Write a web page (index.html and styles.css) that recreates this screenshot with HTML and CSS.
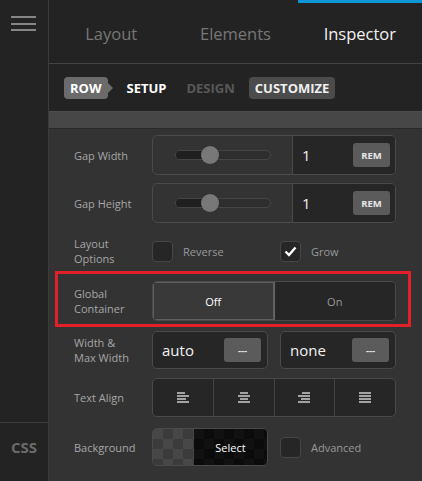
FILE: index.html
```html
<!DOCTYPE html>
<html lang="en">
<head>
  <meta charset="UTF-8">
  <title>Inspector</title>
  <link rel="stylesheet" href="styles.css">
</head>
<body>
  <div class="app">

    <!-- left rail -->
    <aside class="rail">
      <div class="menu"><span></span><span></span><span></span></div>
      <div class="rail-css">CSS</div>
    </aside>

    <main class="panel">
      <nav class="tabs">
        <a class="tab">Layout</a>
        <a class="tab">Elements</a>
        <a class="tab active">Inspector</a>
      </nav>

      <div class="crumbs">
        <span class="crumb crumb-row">ROW</span>
        <span class="crumb crumb-on">SETUP</span>
        <span class="crumb crumb-off">DESIGN</span>
        <span class="crumb crumb-pill">CUSTOMIZE</span>
      </div>
      <div class="band"></div>

      <div class="props">
        <!-- Gap Width -->
        <div class="row">
          <div class="label">Gap Width</div>
          <div class="box">
            <div class="slider">
              <div class="track"><div class="fill"></div><div class="thumb"></div></div>
            </div>
            <div class="value"><span class="num">1</span><button class="unit">REM</button></div>
          </div>
        </div>

        <!-- Gap Height -->
        <div class="row">
          <div class="label">Gap Height</div>
          <div class="box">
            <div class="slider">
              <div class="track"><div class="fill"></div><div class="thumb"></div></div>
            </div>
            <div class="value"><span class="num">1</span><button class="unit">REM</button></div>
          </div>
        </div>

        <!-- Layout Options -->
        <div class="row">
          <div class="label">Layout<br>Options</div>
          <div class="split">
            <label class="check"><span class="tick"></span>Reverse</label>
            <label class="check"><span class="tick on">
              <svg width="13" height="11" viewBox="0 0 13 11"><polyline points="1.5,5.5 5,9 11.5,1.5" fill="none" stroke="#fff" stroke-width="2.4"/></svg>
            </span>Grow</label>
          </div>
        </div>

        <!-- Global Container -->
        <div class="row marked">
          <div class="label">Global<br>Container</div>
          <div class="box toggle">
            <div class="opt selected">Off</div>
            <div class="opt">On</div>
          </div>
        </div>

        <!-- Width & Max Width -->
        <div class="row row-short">
          <div class="label">Width &amp;<br>Max Width</div>
          <div class="split">
            <div class="box field"><span class="num">auto</span><button class="unit">---</button></div>
            <div class="box field"><span class="num">none</span><button class="unit">---</button></div>
          </div>
        </div>

        <!-- Text Align -->
        <div class="row row-align">
          <div class="label">Text Align</div>
          <div class="box aligns">
            <div class="align">
              <svg width="12" height="11" viewBox="0 0 12 11"><rect x="0" y="0" width="8" height="2"/><rect x="0" y="3" width="12" height="2"/><rect x="0" y="6" width="9" height="2"/><rect x="0" y="9" width="12" height="2"/></svg>
            </div>
            <div class="align">
              <svg width="12" height="11" viewBox="0 0 12 11"><rect x="2" y="0" width="8" height="2"/><rect x="0" y="3" width="12" height="2"/><rect x="2" y="6" width="8" height="2"/><rect x="0" y="9" width="12" height="2"/></svg>
            </div>
            <div class="align">
              <svg width="12" height="11" viewBox="0 0 12 11"><rect x="4" y="0" width="8" height="2"/><rect x="0" y="3" width="12" height="2"/><rect x="3" y="6" width="9" height="2"/><rect x="0" y="9" width="12" height="2"/></svg>
            </div>
            <div class="align">
              <svg width="12" height="11" viewBox="0 0 12 11"><rect x="0" y="0" width="12" height="2"/><rect x="0" y="3" width="12" height="2"/><rect x="0" y="6" width="12" height="2"/><rect x="0" y="9" width="12" height="2"/></svg>
            </div>
          </div>
        </div>

        <!-- Background -->
        <div class="row row-short row-bg">
          <div class="label">Background</div>
          <div class="split">
            <div class="box swatch"><div class="checker"></div><div class="pick">Select</div></div>
            <label class="check"><span class="tick"></span>Advanced</label>
          </div>
        </div>
      </div>
    </main>
  </div>
</body>
</html>
```

FILE: styles.css
```css
* { box-sizing: border-box; }
body { margin: 0; background: #333; font-family: "Open Sans", "Noto Sans", sans-serif; overflow: hidden; }
button { font-family: inherit; border: none; cursor: pointer; }

.app { display: flex; height: 481px; }

/* rail */
.rail {
  width: 49px;
  flex: none;
  background: #232323;
  border-right: 1px solid #3b3b3b;
  display: flex;
  flex-direction: column;
}
.menu { padding: 16px 0 0 11px; display: flex; flex-direction: column; gap: 4.5px; }
.menu span { display: block; width: 25px; height: 2px; background: #858585; }
.rail-css {
  margin-top: auto;
  height: 59px;
  border-top: 1px solid #3b3b3b;
  padding-top: 14px;
  text-align: center;
  font-size: 15px;
  line-height: 20px;
  font-weight: 700;
  color: #6b6b6b;
}

.panel { flex: 1; min-width: 0; }

/* tabs */
.tabs {
  display: grid;
  grid-template-columns: 1fr 1fr 1fr;
  height: 64px;
  background: #232323;
  border-bottom: 1px solid #444;
}
.tab {
  display: flex;
  align-items: center;
  justify-content: center;
  border-top: 3px solid transparent;
  font-size: 16.5px;
  color: #777;
}
.tab.active { border-top-color: #0e96d6; color: #f2f2f2; }

/* breadcrumb */
.crumbs {
  height: 47px;
  background: #232323;
  display: flex;
  align-items: center;
  gap: 8px;
  padding-left: 15px;
}
.crumb {
  height: 22px;
  line-height: 22px;
  padding: 0 6px;
  font-size: 13px;
  font-weight: 700;
}
.crumb-row {
  position: relative;
  background: #6b6b6b;
  color: #fff;
  border-radius: 4px;
  margin-right: 5px;
}
.crumb-row::after {
  content: "";
  position: absolute;
  right: -5px;
  top: 6px;
  border-left: 5px solid #6b6b6b;
  border-top: 5px solid transparent;
  border-bottom: 5px solid transparent;
}
.crumb-on { color: #fff; }
.crumb-off { color: #585858; }
.crumb-pill { background: #4b4b4b; color: #f0f0f0; border-radius: 4px; }

.band { height: 18px; background: #474747; border-top: 1px solid #4e4e4e; border-bottom: 1px solid #292929; }

/* property rows */
.props { padding: 6px 26px 0 25px; display: flex; flex-direction: column; gap: 8px; }
.row { display: flex; align-items: center; height: 40px; position: relative; }
.row-short { height: 38px; }
.row-align { height: 39px; margin-top: 1px; }
.row-bg { margin-top: 3px; }
.row.marked { margin: 2px 0; }
.row.marked::after {
  content: "";
  position: absolute;
  left: -19px;
  right: -15px;
  top: -10px;
  bottom: -6px;
  border: 3px solid #e3202a;
  pointer-events: none;
}
.label { width: 78px; flex: none; font-size: 11px; line-height: 15px; color: #a6a6a6; }

.box {
  flex: 1;
  height: 100%;
  display: flex;
  border: 1px solid #4a4a4a;
  border-radius: 5px;
  overflow: hidden;
}

.slider { width: 139px; display: flex; align-items: center; padding-left: 22px; }
.track {
  position: relative;
  width: 96px;
  height: 10px;
  border: 1px solid #454545;
  border-radius: 5px;
  background: #2e2e2e;
}
.fill { width: 34px; height: 100%; background: #1f1f1f; border-radius: 5px 0 0 5px; }
.thumb {
  position: absolute;
  left: 25px;
  top: -5px;
  width: 18px;
  height: 18px;
  border-radius: 50%;
  background: #787878;
}

.value {
  flex: 1;
  display: flex;
  align-items: center;
  justify-content: space-between;
  background: #262626;
  border-left: 1px solid #4a4a4a;
  padding: 0 5px 0 9px;
}
.num { font-size: 15px; color: #f2f2f2; }
.unit {
  width: 37px;
  height: 24px;
  border-radius: 3px;
  background: #5b5b5b;
  color: #e8e8e8;
  font-size: 9.5px;
  font-weight: 700;
  padding: 0;
}

.split { flex: 1; height: 100%; display: grid; grid-template-columns: 1fr 1fr; gap: 12px; align-items: center; }
.check { display: flex; align-items: center; gap: 10px; font-size: 11px; color: #999; }
.tick {
  width: 21px;
  height: 21px;
  flex: none;
  display: flex;
  align-items: center;
  justify-content: center;
  background: #262626;
  border: 1px solid #464646;
  border-radius: 4px;
}

.toggle .opt {
  flex: 1;
  display: flex;
  align-items: center;
  justify-content: center;
  font-size: 11px;
  color: #999;
  background: #262626;
}
.toggle .opt.selected { background: #393939; color: #fff; border-right: 1px solid #666; box-shadow: inset 0 0 0 1px #5e5e5e; }

.field { height: 100%; align-items: center; justify-content: space-between; background: #262626; padding: 0 6px 0 9px; }

.aligns { background: #262626; }
.align { flex: 1; display: flex; align-items: center; justify-content: center; border-left: 1px solid #444; }
.align:first-child { border-left: none; }
.align svg { fill: #a3a3a3; }

.swatch { height: 100%; }
.checker {
  width: 41px;
  background: repeating-conic-gradient(#3b3b3b 0 25%, #474747 0 50%) 0 0 / 20px 20px;
}
.pick {
  flex: 1;
  display: flex;
  align-items: center;
  justify-content: center;
  font-size: 11px;
  color: #fff;
  background: repeating-conic-gradient(#0b0b0b 0 25%, #111 0 50%) 0 0 / 20px 20px;
}
```
